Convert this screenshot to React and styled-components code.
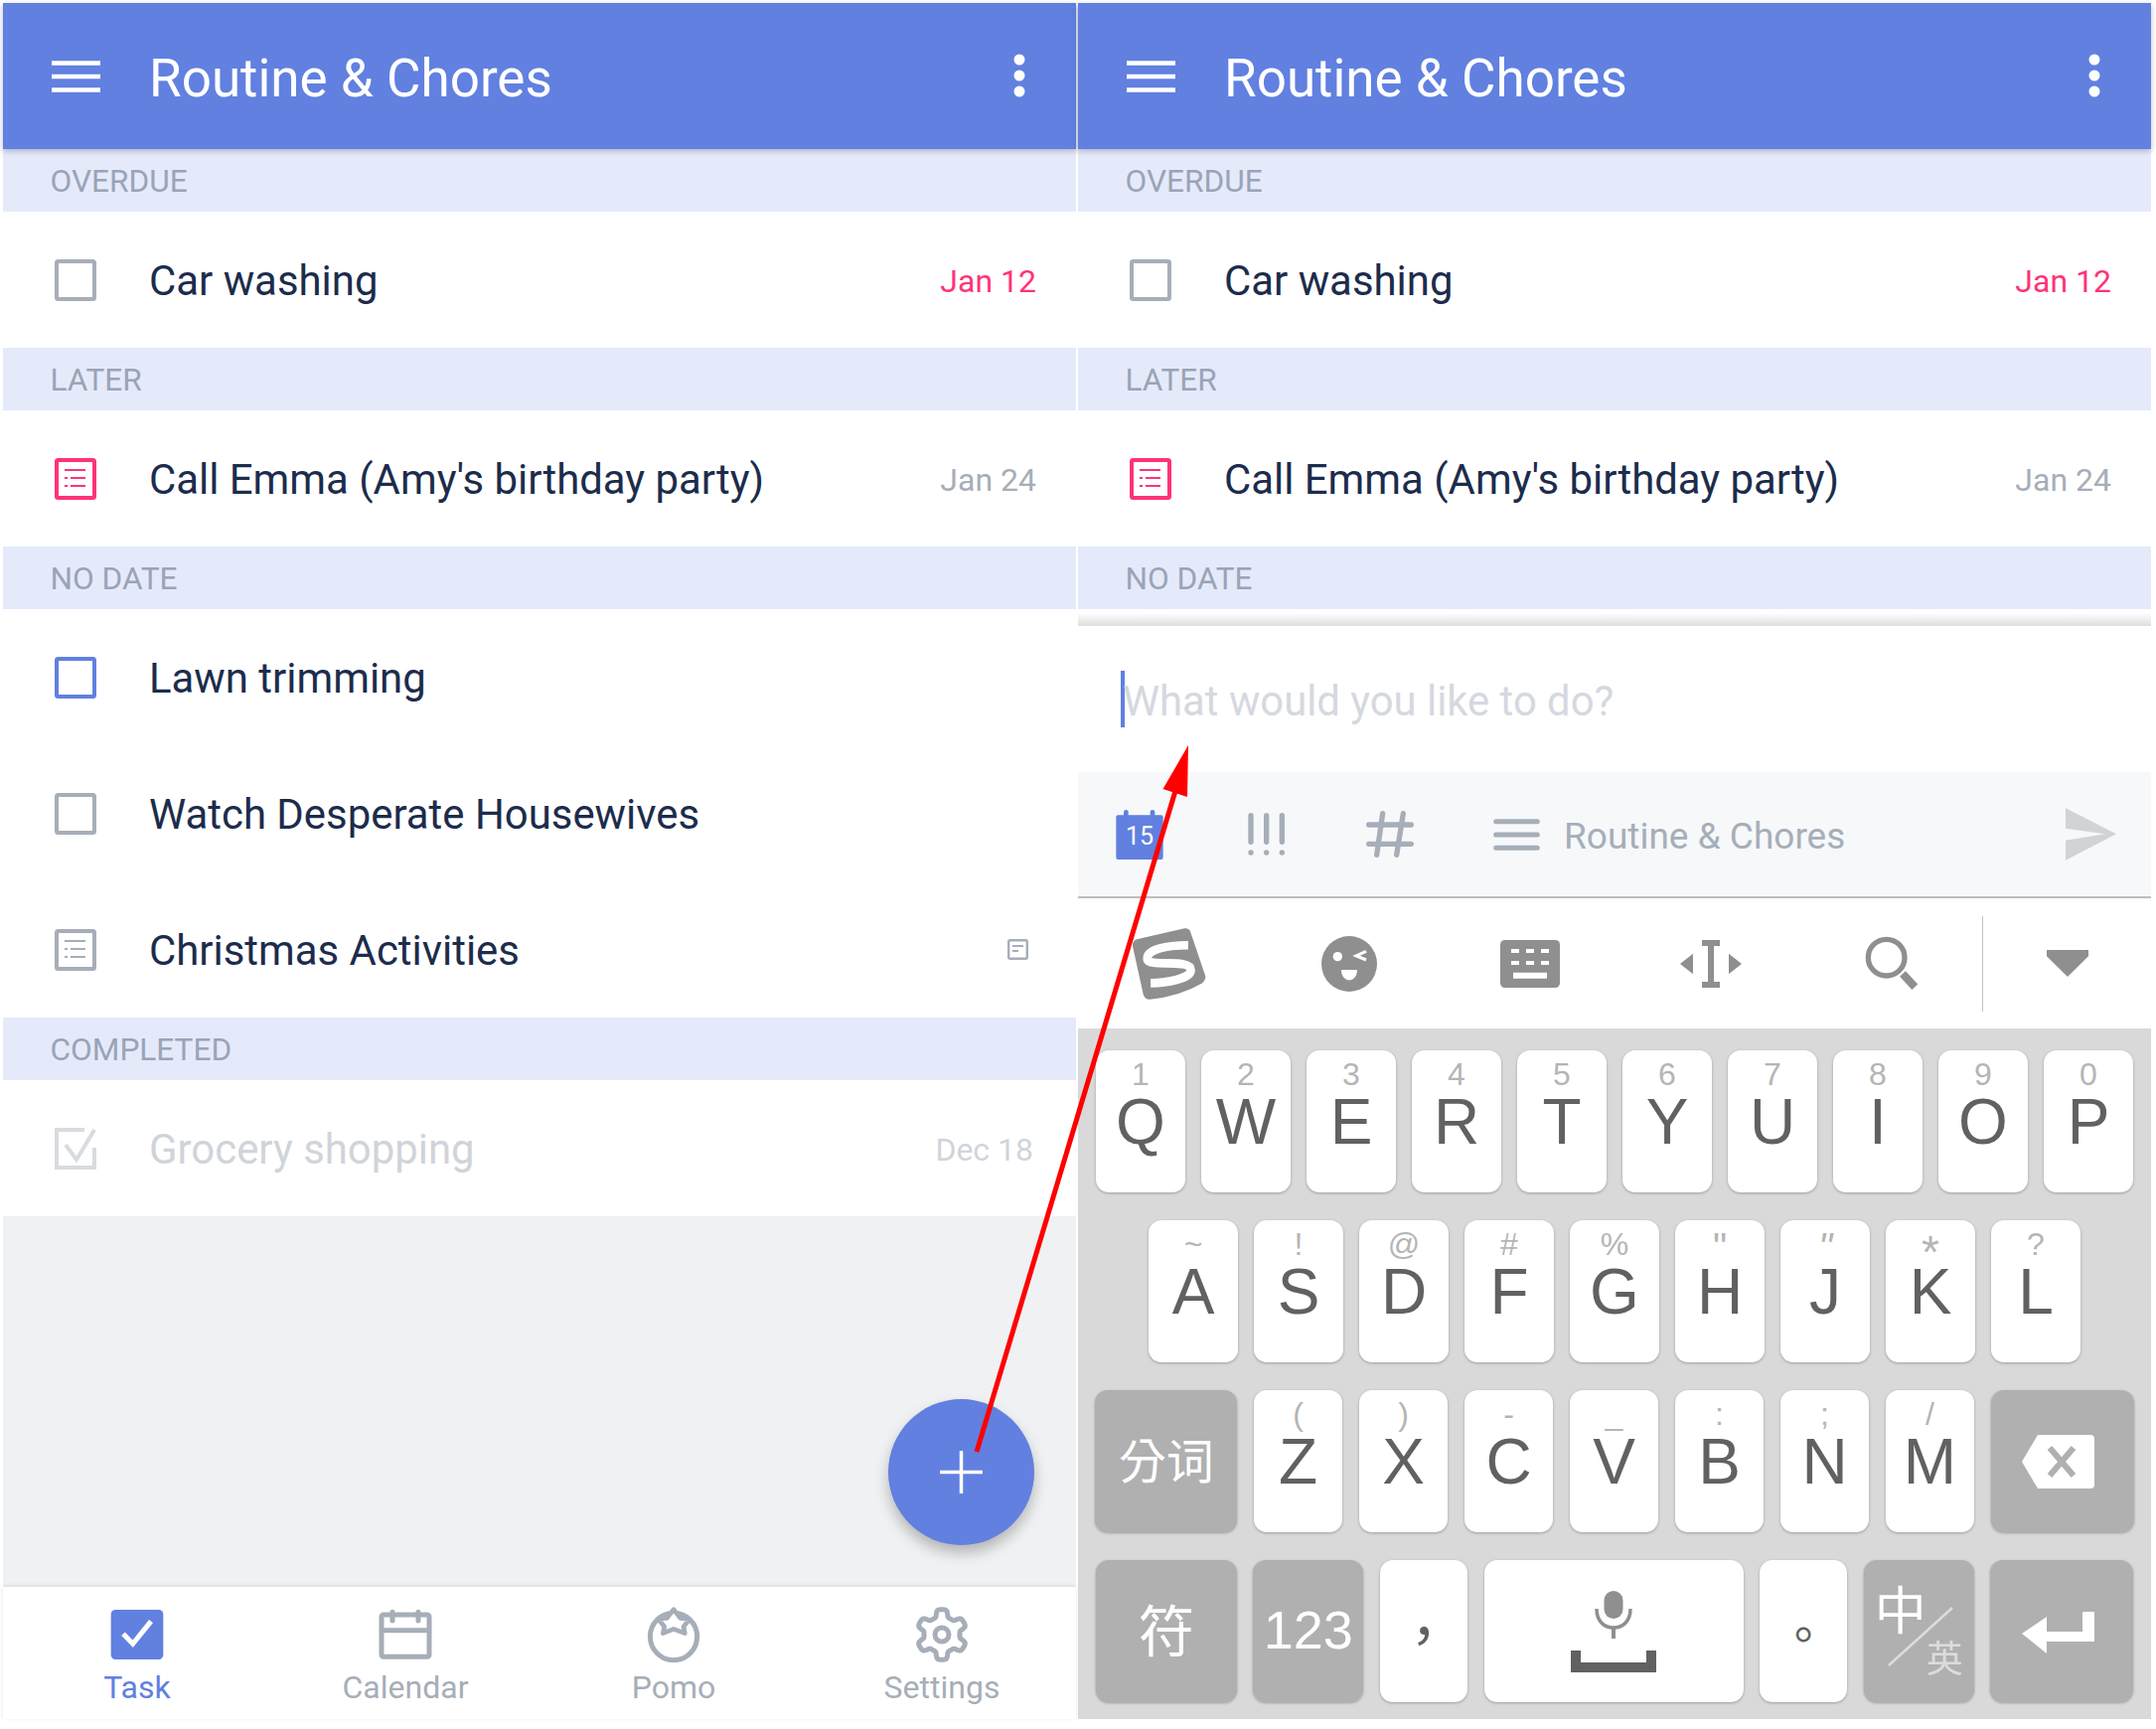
import React from 'react';
import styled, { createGlobalStyle } from 'styled-components';

const BLUE = '#6180e0';
const GREY = '#a6aeb8';
const KEYICON = '#8f8f8f';

const Global = createGlobalStyle`
  html, body { margin: 0; padding: 0; background: #fff; }
  body { font-family: Roboto, "Noto Sans", sans-serif; }
  * { box-sizing: border-box; }
`;

const Page = styled.div`
  position: relative;
  width: 2170px;
  height: 1740px;
  padding: 3px 0 0 3px;
  display: flex;
  gap: 2px;
  overflow: hidden;
  background: #fff;
`;
const Phone = styled.div`
  position: relative;
  width: 1080px;
  height: 1727px;
  display: flex;
  flex-direction: column;
  background: #fff;
`;
const AppBar = styled.header`
  position: relative;
  z-index: 1;
  flex: none;
  height: 147px;
  background: ${BLUE};
  box-shadow: 0 2px 6px rgba(60, 70, 100, 0.35);
  display: flex;
  align-items: center;
  padding: 0 51px 0 49px;
  color: #fff;
`;
const Title = styled.h1`
  flex: 1;
  margin: 4px 0 0 49px;
  font-size: 53px;
  font-weight: 400;
  line-height: 60px;
`;
const Section = styled.div`
  flex: none;
  height: 63px;
  background: #e5eafb;
  color: #9aa4b6;
  font-size: 31.6px;
  line-height: 65px;
  padding-left: 47.5px;
`;
const Row = styled.div`
  flex: none;
  height: 137px;
  display: flex;
  align-items: center;
  padding: 0 40px 0 52px;
  background: #fff;
`;
const RowIcon = styled.svg`
  flex: none;
  width: 42px;
  height: 42px;
  margin-right: 53px;
  display: block;
`;
const RowText = styled.span`
  flex: 1;
  font-size: 41.9px;
  line-height: 50px;
  padding-top: 3px;
  color: ${p => (p.$done ? '#d0d4da' : '#1c2c4c')};
`;
const RowDate = styled.span`
  font-size: 32px;
  line-height: 40px;
  padding-top: 2px;
  margin-right: ${p => p.$inset || 0}px;
  color: ${p => p.$color};
`;
const NoteMark = styled.svg`
  width: 21px;
  height: 21px;
  margin-right: 8px;
  display: block;
`;
const Empty = styled.div`
  flex: 1;
  background: #f0f1f3;
`;
const Fab = styled.button`
  position: absolute;
  left: 891px;
  top: 1405px;
  width: 147px;
  height: 147px;
  border: 0;
  padding: 0;
  border-radius: 50%;
  background: ${BLUE};
  box-shadow: 0 8px 14px rgba(0, 0, 0, 0.25);
  display: flex;
  align-items: center;
  justify-content: center;
`;
const Nav = styled.nav`
  position: relative;
  flex: none;
  height: 133px;
  display: grid;
  grid-template-columns: repeat(4, 1fr);
  background: #fff;
  box-shadow: 0 -1px 4px rgba(0, 0, 0, 0.1);
`;
const NavItem = styled.div`
  display: flex;
  flex-direction: column;
  align-items: center;
  padding-top: 20px;
  color: ${p => (p.$active ? BLUE : GREY)};
  font-size: 32px;
  line-height: 40px;
`;
const NavIcon = styled.svg`
  width: 60px;
  height: 56px;
  display: block;
  margin-bottom: 5px;
`;
const Shade = styled.div`
  flex: none;
  height: 17px;
  background: linear-gradient(#fff 20%, #dedede);
`;
const Composer = styled.div`
  flex: none;
  height: 147px;
  padding-left: 43px;
  display: flex;
  align-items: center;
  background: #fff;
`;
const Caret = styled.div`
  width: 4px;
  height: 57px;
  background: ${BLUE};
  flex: none;
`;
const Placeholder = styled.span`
  font-size: 41.8px;
  line-height: 50px;
  color: #d5d8df;
  margin: 4px 0 0 -2px;
`;
const Tools = styled.div`
  flex: none;
  height: 127px;
  background: #f6f8fa;
  border-bottom: 2px solid #bdbdbd;
  display: flex;
  align-items: center;
  padding-left: 38px;
  color: ${GREY};
`;
const ToolIcon = styled.svg`
  flex: none;
  display: block;
  margin-left: ${p => p.$ml || 0}px;
`;
const ToolLabel = styled.span`
  flex: 1;
  margin: 5px 0 0 24px;
  font-size: 37px;
  line-height: 44px;
`;
const ImeBar = styled.div`
  flex: none;
  height: 131px;
  display: flex;
  align-items: center;
  background: #fff;
`;
const ImeCell = styled.div`
  width: ${p => p.$w || 182}px;
  flex: ${p => (p.$grow ? 1 : 'none')};
  display: flex;
  align-items: center;
  justify-content: center;
`;
const ImeRule = styled.div`
  width: 1px;
  height: 96px;
  background: #c4c4c4;
  flex: none;
`;
const Keyboard = styled.div`
  flex: 1;
  background: #d9d9d9;
  padding: 22px 18px 0;
  display: flex;
  flex-direction: column;
  gap: 28px;
`;
const KeyRow = styled.div`
  display: flex;
  justify-content: center;
  gap: ${p => p.$gap || 16.5}px;
`;
const Key = styled.div`
  position: relative;
  flex: none;
  width: ${p => p.$w || 89.5}px;
  height: 143px;
  border-radius: 13px;
  background: ${p => (p.$dark ? '#b0b0b0' : '#fff')};
  box-shadow: 0 1px 3px rgba(0, 0, 0, 0.28);
  font-family: "Liberation Sans", Arial, sans-serif;
  text-align: center;
  padding-top: 8px;
`;
const CenterKey = styled(Key)`
  padding: ${p => p.$pad || '0'};
  display: flex;
  align-items: center;
  justify-content: center;
  color: ${p => (p.$dark ? '#fff' : '#616161')};
  font-size: ${p => p.$size || 48}px;
  font-family: ${p => (p.$cjk ? '"Noto Sans CJK TC", "Noto Sans CJK SC", sans-serif' : '"Liberation Sans", Arial, sans-serif')};
`;
const Hint = styled.div`
  position: relative;
  top: ${p => p.$top || 0}px;
  font-size: ${p => p.$size || 32}px;
  font-style: ${p => (p.$slant ? 'italic' : 'normal')};
  line-height: 32px;
  height: 32px;
  color: #b5b5b5;
`;
const Letter = styled.div`
  font-size: 64px;
  line-height: 64px;
  color: #616161;
`;
const Zhong = styled.span`
  position: absolute;
  left: 11px;
  top: 18px;
  font-family: "Noto Sans CJK SC", sans-serif;
  font-size: 52px;
  line-height: 60px;
  color: #fff;
`;
const Ying = styled.span`
  position: absolute;
  left: 63px;
  top: 75px;
  font-family: "Noto Sans CJK SC", sans-serif;
  font-size: 37px;
  line-height: 44px;
  color: #dcdcdc;
`;
const Slash = styled.svg`
  position: absolute;
  left: 0;
  top: 0;
  width: 112px;
  height: 143px;
`;
const Overlay = styled.svg`
  position: absolute;
  left: 0;
  top: 0;
  width: 2170px;
  height: 1740px;
  z-index: 5;
  pointer-events: none;
`;

const Box = ({ color }) => (
  <RowIcon viewBox="0 0 42 42">
    <rect x="2" y="2" width="38" height="38" rx="1.5" fill="none" stroke={color} strokeWidth="4" />
  </RowIcon>
);
const ListBox = ({ color }) => (
  <RowIcon viewBox="0 0 42 42">
    <rect x="2" y="2" width="38" height="38" rx="1.5" fill="none" stroke={color} strokeWidth="4" />
    <path d="M10 12H31M10 20H13M16 20H31M10 28H13M16 28H31" stroke={color} strokeWidth="2" fill="none" />
  </RowIcon>
);
const DoneBox = ({ color }) => (
  <RowIcon viewBox="0 0 42 42">
    <path d="M30 2H2V40H40V20" fill="none" stroke={color} strokeWidth="4" />
    <path d="M11 17L22 32L40 2" fill="none" stroke={color} strokeWidth="4" />
  </RowIcon>
);

const TaskRow = ({ icon, text, date, dateColor, done, note }) => (
  <Row>
    {icon}
    <RowText $done={done}>{text}</RowText>
    {date && <RowDate $color={dateColor} $inset={done ? 3 : 0}>{date}</RowDate>}
    {note && (
      <NoteMark viewBox="0 0 21 21">
        <rect x="1.2" y="1.2" width="18.6" height="18.6" rx="1.5" fill="none" stroke={GREY} strokeWidth="2.4" />
        <path d="M5 7H16M5 12H11" stroke={GREY} strokeWidth="2" />
      </NoteMark>
    )}
  </Row>
);

const TopPart = () => (
  <>
    <AppBar>
      <svg width="49" height="32" viewBox="0 0 49 32" style={{ flex: 'none' }}>
        <path d="M0 2.5H49M0 16H49M0 29.5H49" stroke="#fff" strokeWidth="4.5" />
      </svg>
      <Title>Routine &amp; Chores</Title>
      <svg width="12" height="44" viewBox="0 0 12 44" style={{ flex: 'none', marginTop: -2 }}>
        <circle cx="6" cy="6" r="5.5" fill="#fff" />
        <circle cx="6" cy="22" r="5.5" fill="#fff" />
        <circle cx="6" cy="38" r="5.5" fill="#fff" />
      </svg>
    </AppBar>
    <Section>OVERDUE</Section>
    <TaskRow icon={<Box color={GREY} />} text="Car washing" date="Jan 12" dateColor="#ff3378" />
    <Section>LATER</Section>
    <TaskRow icon={<ListBox color="#ff3378" />} text="Call Emma (Amy's birthday party)" date="Jan 24" dateColor={GREY} />
    <Section>NO DATE</Section>
  </>
);

const gearPath = (() => {
  const pts = [];
  for (let i = 0; i < 120; i++) {
    const t = (i / 120) * Math.PI * 2;
    const r = 65 + (11 * Math.tanh(2.6 * Math.cos(6 * t))) / Math.tanh(2.6);
    pts.push(`${(r * Math.sin(t)).toFixed(1)} ${(-r * Math.cos(t)).toFixed(1)}`);
  }
  return 'M' + pts.join('L') + 'Z';
})();

const LeftScreen = () => (
  <Phone>
    <TopPart />
    <TaskRow icon={<Box color={BLUE} />} text="Lawn trimming" />
    <TaskRow icon={<Box color={GREY} />} text="Watch Desperate Housewives" />
    <TaskRow icon={<ListBox color={GREY} />} text="Christmas Activities" note />
    <Section>COMPLETED</Section>
    <TaskRow icon={<DoneBox color="#d8dbe0" />} text="Grocery shopping" date="Dec 18" dateColor="#d0d4da" done />
    <Empty />
    <Fab aria-label="Add">
      <svg width="43" height="43" viewBox="0 0 43 43">
        <path d="M21.5 0V43M0 21.5H43" stroke="#fff" strokeWidth="3.5" />
      </svg>
    </Fab>
    <Nav>
      <NavItem $active>
        <NavIcon viewBox="0 0 180 168">
          <rect x="11" y="9" width="158" height="150" rx="14" fill={BLUE} />
          <path d="M48 82L77 112L132 44" fill="none" stroke="#fff" strokeWidth="15" />
        </NavIcon>
        Task
      </NavItem>
      <NavItem>
        <NavIcon viewBox="0 0 180 168">
          <rect x="18" y="24" width="144" height="127" rx="6" fill="none" stroke={GREY} strokeWidth="15" />
          <path d="M18 71H162" stroke={GREY} strokeWidth="15" />
          <path d="M51 16V42M129 16V42" stroke={GREY} strokeWidth="15" strokeLinecap="round" />
        </NavIcon>
        Calendar
      </NavItem>
      <NavItem>
        <NavIcon viewBox="0 0 180 168">
          <circle cx="90" cy="90" r="71" fill="none" stroke={GREY} strokeWidth="15" />
          <path d="M90 8L110 34L138 37L120 60L124 80L90 67L58 80L62 60L43 36L70 34Z" fill="#fff" stroke={GREY} strokeWidth="14" strokeLinejoin="round" />
        </NavIcon>
        Pomo
      </NavItem>
      <NavItem>
        <NavIcon viewBox="0 0 180 168">
          <g transform="translate(90 84)">
            <path d={gearPath} fill="none" stroke={GREY} strokeWidth="15" strokeLinejoin="round" />
            <circle r="21" fill="none" stroke={GREY} strokeWidth="15" />
          </g>
        </NavIcon>
        Settings
      </NavItem>
    </Nav>
  </Phone>
);

const row1 = [['1', 'Q'], ['2', 'W'], ['3', 'E'], ['4', 'R'], ['5', 'T'], ['6', 'Y'], ['7', 'U'], ['8', 'I'], ['9', 'O'], ['0', 'P']];
const row2 = [
  ['~', 'A'], ['!', 'S'], ['@', 'D'], ['#', 'F'], ['%', 'G'],
  ['"', 'H', { $size: 40, $top: 3 }],
  ['"', 'J', { $size: 40, $top: 3, $slant: true }],
  ['*', 'K', { $size: 46, $top: 8 }],
  ['?', 'L'],
];
const row3 = [['(', 'Z'], [')', 'X'], ['-', 'C'], ['_', 'V'], [':', 'B'], [';', 'N'], ['/', 'M']];

const LetterKey = ({ k }) => (
  <Key>
    <Hint {...k[2]}>{k[0]}</Hint>
    <Letter>{k[1]}</Letter>
  </Key>
);

const RightScreen = () => (
  <Phone>
    <TopPart />
    <Shade />
    <Composer>
      <Caret />
      <Placeholder>What would you like to do?</Placeholder>
    </Composer>
    <Tools>
      <ToolIcon width="48" height="50" viewBox="0 0 144 150">
        <rect x="1" y="16" width="142" height="134" rx="6" fill={BLUE} />
        <rect x="24" y="0" width="14" height="30" rx="7" fill={BLUE} />
        <rect x="104" y="0" width="14" height="30" rx="7" fill={BLUE} />
        <text x="72" y="104" textAnchor="middle" fontFamily="Roboto" fontSize="75" fill="#fff">15</text>
      </ToolIcon>
      <ToolIcon $ml={85} width="38" height="43" viewBox="0 0 114 129">
        <path d="M9 8V88M56 8V88M103 8V88" stroke={GREY} strokeWidth="16" strokeLinecap="round" />
        <circle cx="9" cy="120" r="8" fill={GREY} />
        <circle cx="56" cy="120" r="8" fill={GREY} />
        <circle cx="103" cy="120" r="8" fill={GREY} />
      </ToolIcon>
      <ToolIcon $ml={81} width="48" height="47" viewBox="0 0 144 141">
        <path d="M8 42H136M8 100H136M50 8L32 133M112 8L92 133" stroke={GREY} strokeWidth="16" strokeLinecap="round" fill="none" />
      </ToolIcon>
      <ToolIcon $ml={80} width="47" height="32" viewBox="0 0 141 96">
        <path d="M8 8H133M8 48H133M8 88H133" stroke={GREY} strokeWidth="15" strokeLinecap="round" />
      </ToolIcon>
      <ToolLabel>Routine &amp; Chores</ToolLabel>
      <svg width="51" height="53" viewBox="1316 42 154 158" style={{ flex: 'none', marginRight: 35 }}>
        <path d="M1316 42L1470 120L1316 200V140L1436 120L1316 104Z" fill="#d0d4d4" />
      </svg>
    </Tools>
    <ImeBar>
      <ImeCell>
        <svg width="75" height="72" viewBox="85 398 225 217">
          <path d="M100 432L245 399Q258 397 263 410L307 540Q312 555 298 565Q230 605 140 614Q125 615 120 600L88 455Q85 437 100 432Z" fill={KEYICON} />
          <path d="M256 450C190 450 128 463 132 493C136 518 262 488 264 525C264 552 190 564 142 565" fill="none" stroke="#fff" strokeWidth="26" />
        </svg>
      </ImeCell>
      <ImeCell>
        <svg width="56" height="56" viewBox="660 423 168 168">
          <circle cx="744" cy="507" r="84" fill={KEYICON} />
          <circle cx="709" cy="485" r="14" fill="#fff" />
          <path d="M795 469L765 483L795 495" fill="none" stroke="#fff" strokeWidth="9" />
          <path d="M720 525H768C768 545 756 556 744 556C732 556 720 545 720 525Z" fill="#fff" />
        </svg>
      </ImeCell>
      <ImeCell>
        <svg width="60" height="48" viewBox="1200 435 180 144">
          <rect x="1200" y="435" width="180" height="144" rx="14" fill={KEYICON} />
          <path d="M1233 462h24v12h-24zM1278 462h24v12h-24zM1323 462h24v12h-24zM1233 498h24v12h-24zM1278 498h24v12h-24zM1323 498h24v12h-24zM1239 533h102v18h-102z" fill="#fff" />
        </svg>
      </ImeCell>
      <ImeCell>
        <svg width="62" height="48" viewBox="153 435 186 144">
          <path d="M219 435H273V453H255V561H273V579H219V561H237V453H219ZM192 476V538L153 507ZM300 476L339 507L300 538Z" fill={KEYICON} />
        </svg>
      </ImeCell>
      <ImeCell>
        <svg width="54" height="55" viewBox="712 424 162 165">
          <circle cx="777" cy="489" r="55" fill="none" stroke={KEYICON} strokeWidth="16" />
          <path d="M826 538L863 578" stroke={KEYICON} strokeWidth="24" />
        </svg>
      </ImeCell>
      <ImeRule />
      <ImeCell $grow>
        <svg width="42" height="27" viewBox="1260 471 126 81">
          <path d="M1260 471H1386V490L1323 552L1260 490Z" fill={KEYICON} />
        </svg>
      </ImeCell>
    </ImeBar>
    <Keyboard>
      <KeyRow>{row1.map(k => <LetterKey key={k[1]} k={k} />)}</KeyRow>
      <KeyRow>{row2.map(k => <LetterKey key={k[1]} k={k} />)}</KeyRow>
      <KeyRow>
        <CenterKey $w={143} $dark $cjk $size={48} $pad="0 0 8px">分词</CenterKey>
        {row3.map(k => <LetterKey key={k[1]} k={k} />)}
        <CenterKey $w={144} $dark $pad="0 8px 0 0">
          <svg width="73" height="54" viewBox="0 0 73 54">
            <path d="M16 0H69Q73 0 73 4V50Q73 54 69 54H16L0 27Z" fill="#fff" />
            <path d="M28 13L52 41M52 13L28 41" stroke="#b0b0b0" strokeWidth="6" />
          </svg>
        </CenterKey>
      </KeyRow>
      <KeyRow $gap={16.6}>
        <CenterKey $w={142} $dark $cjk $size={56} $pad="0 0 8px">符</CenterKey>
        <CenterKey $w={111} $dark $size={54} $pad="0 0 4px">123</CenterKey>
        <CenterKey $w={88} $cjk $size={56}>，</CenterKey>
        <CenterKey $w={261}>
          <svg width="86" height="82" viewBox="0 0 86 82">
            <rect x="33.5" y="0" width="19" height="28" rx="9.5" fill={KEYICON} />
            <path d="M26 18C26 30 33 37 43 37C53 37 60 30 60 18" fill="none" stroke={KEYICON} strokeWidth="3.5" />
            <path d="M43 36V48" stroke={KEYICON} strokeWidth="4" />
            <path d="M5 60V77H81V60" fill="none" stroke="#616161" strokeWidth="10" />
          </svg>
        </CenterKey>
        <CenterKey $w={88} $cjk $size={48}>。</CenterKey>
        <Key $w={111} $dark>
          <Zhong>中</Zhong>
          <Slash viewBox="0 0 112 143">
            <path d="M89 48L25 106" stroke="#dcdcdc" strokeWidth="2.5" />
          </Slash>
          <Ying>英</Ying>
        </Key>
        <CenterKey $w={144} $dark $pad="3px 8px 0 0">
          <svg width="73" height="42" viewBox="0 0 73 42">
            <path d="M61 0H73V30H25V42L0 22L25 5V20H61Z" fill="#fff" />
          </svg>
        </CenterKey>
      </KeyRow>
    </Keyboard>
  </Phone>
);

export default function App() {
  return (
    <Page>
      <Global />
      <LeftScreen />
      <RightScreen />
      <Overlay viewBox="0 0 2170 1740">
        <path d="M983 1461L1186 786" stroke="#ff0000" strokeWidth="5" />
        <path d="M1196 750L1170.5 794L1195 802Z" fill="#ff0000" />
      </Overlay>
    </Page>
  );
}
